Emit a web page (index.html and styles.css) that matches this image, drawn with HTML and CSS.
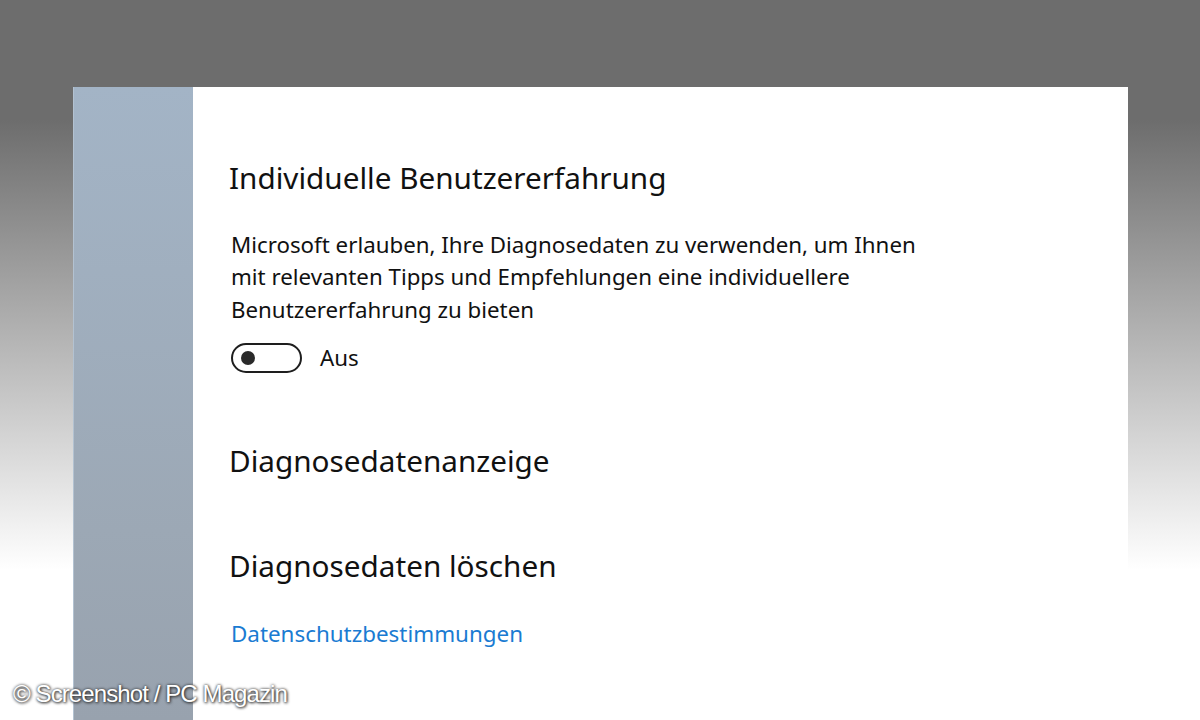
FILE: index.html
```html
<!DOCTYPE html>
<html lang="de">
<head>
  <meta charset="UTF-8">
  <title>Datenschutz - Diagnose</title>
  <link rel="stylesheet" href="styles.css">
</head>
<body>
  <div class="window">
    <div class="sidebar"></div>
    <div class="content">
      <h2 class="section-title">Individuelle Benutzererfahrung</h2>
      <p class="desc">Microsoft erlauben, Ihre Diagnosedaten zu verwenden, um Ihnen<br>mit relevanten Tipps und Empfehlungen eine individuellere<br>Benutzererfahrung zu bieten</p>
      <div class="toggle-row">
        <span class="toggle"><span class="knob"></span></span>
        <span class="toggle-label">Aus</span>
      </div>
      <h2 class="section-title spaced">Diagnosedatenanzeige</h2>
      <h2 class="section-title spaced-sm">Diagnosedaten löschen</h2>
      <a class="link" href="#">Datenschutzbestimmungen</a>
    </div>
  </div>
  <div class="credit">© Screenshot / PC Magazin</div>
</body>
</html>
```

FILE: styles.css
```css
html, body {
  height: 100%;
}
body {
  margin: 0;
  overflow: hidden;
  font-family: 'Noto Sans', 'Open Sans', sans-serif;
  background: linear-gradient(#6d6d6d 0, #6d6d6d 120px, #ffffff 570px, #ffffff 100%);
  position: relative;
}
.window {
  display: flex;
  margin: 87px 0 0 73px;
  width: 1055px;
  height: 633px;
}
.sidebar {
  width: 120px;
  flex-shrink: 0;
  background: linear-gradient(#a3b4c6, #9ca8b5 70%, #98a2ae);
  border-left: 1px solid #b3c2d1;
  box-sizing: border-box;
}
.content {
  flex: 1;
  background: #fff;
  padding: 71px 0 0 36px;
  color: #111;
}
.section-title {
  font-size: 29.7px;
  font-weight: 400;
  line-height: 40px;
  margin: 0;
  color: #111;
}
.spaced {
  margin-top: 68px;
}
.spaced-sm {
  margin-top: 65px;
}
.desc {
  font-size: 22.3px;
  line-height: 32.5px;
  margin: 30.5px 0 0 2px;
}
.toggle-row {
  display: flex;
  align-items: center;
  margin: 17px 0 0 2px;
}
.toggle {
  display: flex;
  align-items: center;
  width: 71px;
  height: 30px;
  box-sizing: border-box;
  border: 2.5px solid #1e1e1e;
  border-radius: 15px;
  padding-left: 8px;
}
.knob {
  width: 14px;
  height: 14px;
  border-radius: 50%;
  background: #2a2a2a;
}
.toggle-label {
  font-size: 22.3px;
  margin-left: 18px;
  line-height: 30px;
}
.link {
  display: block;
  font-size: 22.4px;
  line-height: 32.5px;
  margin: 31.5px 0 0 2px;
  color: #1a7bd2;
  text-decoration: none;
}
.credit {
  position: absolute;
  left: 13px;
  bottom: 12px;
  font-family: 'Liberation Sans', Arial, sans-serif;
  font-size: 24px;
  color: #fff;
  letter-spacing: -0.9px;
  text-shadow: 0 0 3px #2a2a2a, 1px 1px 3px #3a3a3a;
}
```
